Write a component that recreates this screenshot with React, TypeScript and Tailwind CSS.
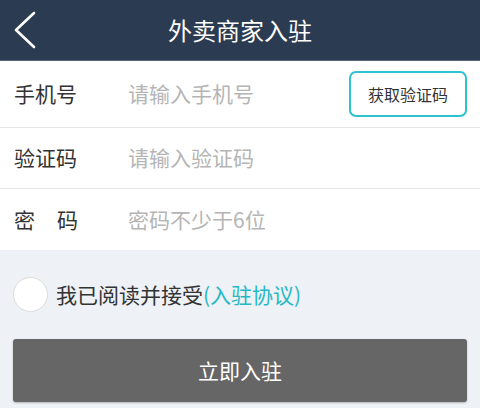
import React from "react";

const font = { fontFamily: '"Noto Sans CJK SC", "Noto Sans", sans-serif' };

export default function App() {
  return (
    <div className="w-[480px] h-[408px] bg-[#eef1f5] overflow-hidden" style={font}>
      <div className="relative h-[61px] bg-[#2b3b52] border-b border-[#5a6677] flex items-center justify-center">
        <svg className="absolute left-[12px] top-[11px]" width="26" height="38" viewBox="0 0 26 38">
          <path d="M22 2 L4 19 L22 36" fill="none" stroke="#fff" strokeWidth="2.6" strokeLinecap="round" strokeLinejoin="round" />
        </svg>
        <span className="text-white text-[24px] leading-none">外卖商家入驻</span>
      </div>
      <div className="bg-white">
        <div className="h-[67px] flex items-center border-b border-[#e6e6e6] pl-[14px] pr-[13px]">
          <span className="w-[114px] text-[21px] text-[#333]">手机号</span>
          <span className="flex-1 text-[21px] text-[#b5b5b5]">请输入手机号</span>
          <button className="w-[118px] h-[46px] rounded-[7px] border-2 border-[#2cc2ce] text-[16px] text-[#333] bg-white">获取验证码</button>
        </div>
        <div className="h-[61px] flex items-center border-b border-[#e6e6e6] pl-[14px]">
          <span className="w-[114px] text-[21px] text-[#333]">验证码</span>
          <span className="text-[21px] text-[#b5b5b5]">请输入验证码</span>
        </div>
        <div className="h-[61px] flex items-center pl-[14px]">
          <span className="w-[114px] text-[21px] text-[#333] flex">
            <span className="w-[64px] flex justify-between"><span>密</span><span>码</span></span>
          </span>
          <span className="text-[21px] text-[#b5b5b5]">密码不少于6位</span>
        </div>
      </div>
      <div className="flex items-center pl-[13px] mt-[26px] h-[37px]">
        <span className="w-[35px] h-[35px] rounded-full bg-white border border-[#dcdcdc]"></span>
        <span className="ml-[8px] text-[21px] text-[#333]">
          我已阅读并接受<span className="text-[#26b9c5]">(入驻协议)</span>
        </span>
      </div>
      <div className="px-[13px] mt-[26px]">
        <button className="w-full h-[63px] rounded-[3px] bg-[#666666] text-white text-[21px] shadow-[0_1px_2px_rgba(0,0,0,0.25)]">立即入驻</button>
      </div>
    </div>
  );
}
